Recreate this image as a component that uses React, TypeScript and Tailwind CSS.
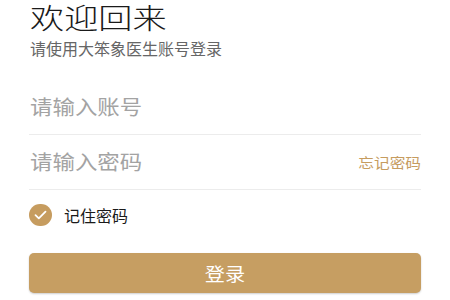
import React from "react";

export default function App() {
  return (
    <div
      className="w-[450px] h-[300px] bg-white overflow-hidden px-[29px]"
      style={{ fontFamily: '"Noto Sans CJK SC", "Noto Sans", sans-serif' }}
    >
      <div className="h-[34px] flex items-center pl-[1px]">
        <span className="inline-block text-[28px] leading-[34px] font-light text-[#1a1a1a] scale-x-[1.22] origin-left">欢迎回来</span>
      </div>
      <div className="mt-[4px] h-[20px] text-[16px] leading-[20px] text-[#666666] pl-[1px]">
        请使用大笨象医生账号登录
      </div>
      <div className="mt-[22px] h-[55px] flex items-center border-b border-[#ececec]">
        <span className="inline-block text-[20px] leading-[26px] text-[#a3a3a3] pl-[1px] scale-x-[1.12] origin-left">请输入账号</span>
      </div>
      <div className="h-[55px] flex items-center justify-between border-b border-[#ececec]">
        <span className="inline-block text-[20px] leading-[26px] text-[#a3a3a3] pl-[1px] scale-x-[1.12] origin-left">请输入密码</span>
        <span className="inline-block text-[14px] leading-[20px] text-[#c69c5f] scale-x-[1.12] origin-right">忘记密码</span>
      </div>
      <div className="mt-[14px] h-[22px] flex items-center">
        <div className="w-[23px] h-[22px] rounded-full bg-[#c69c5f] flex items-center justify-center">
          <svg width="13" height="10" viewBox="0 0 13 10" fill="none">
            <path d="M1.5 5.2 L4.8 8.3 L11.5 1.6" stroke="white" strokeWidth="1.8" strokeLinecap="round" strokeLinejoin="round" />
          </svg>
        </div>
        <span className="ml-[12px] text-[16px] leading-[20px] text-[#1a1a1a]">记住密码</span>
      </div>
      <button className="mt-[27px] w-full h-[40px] rounded-[5px] bg-[#c69e62] text-white shadow-[0_1px_2px_rgba(0,0,0,0.2)] flex items-center justify-center">
        <span className="inline-block text-[18px] leading-[24px] scale-x-[1.12]">登录</span>
      </button>
    </div>
  );
}
